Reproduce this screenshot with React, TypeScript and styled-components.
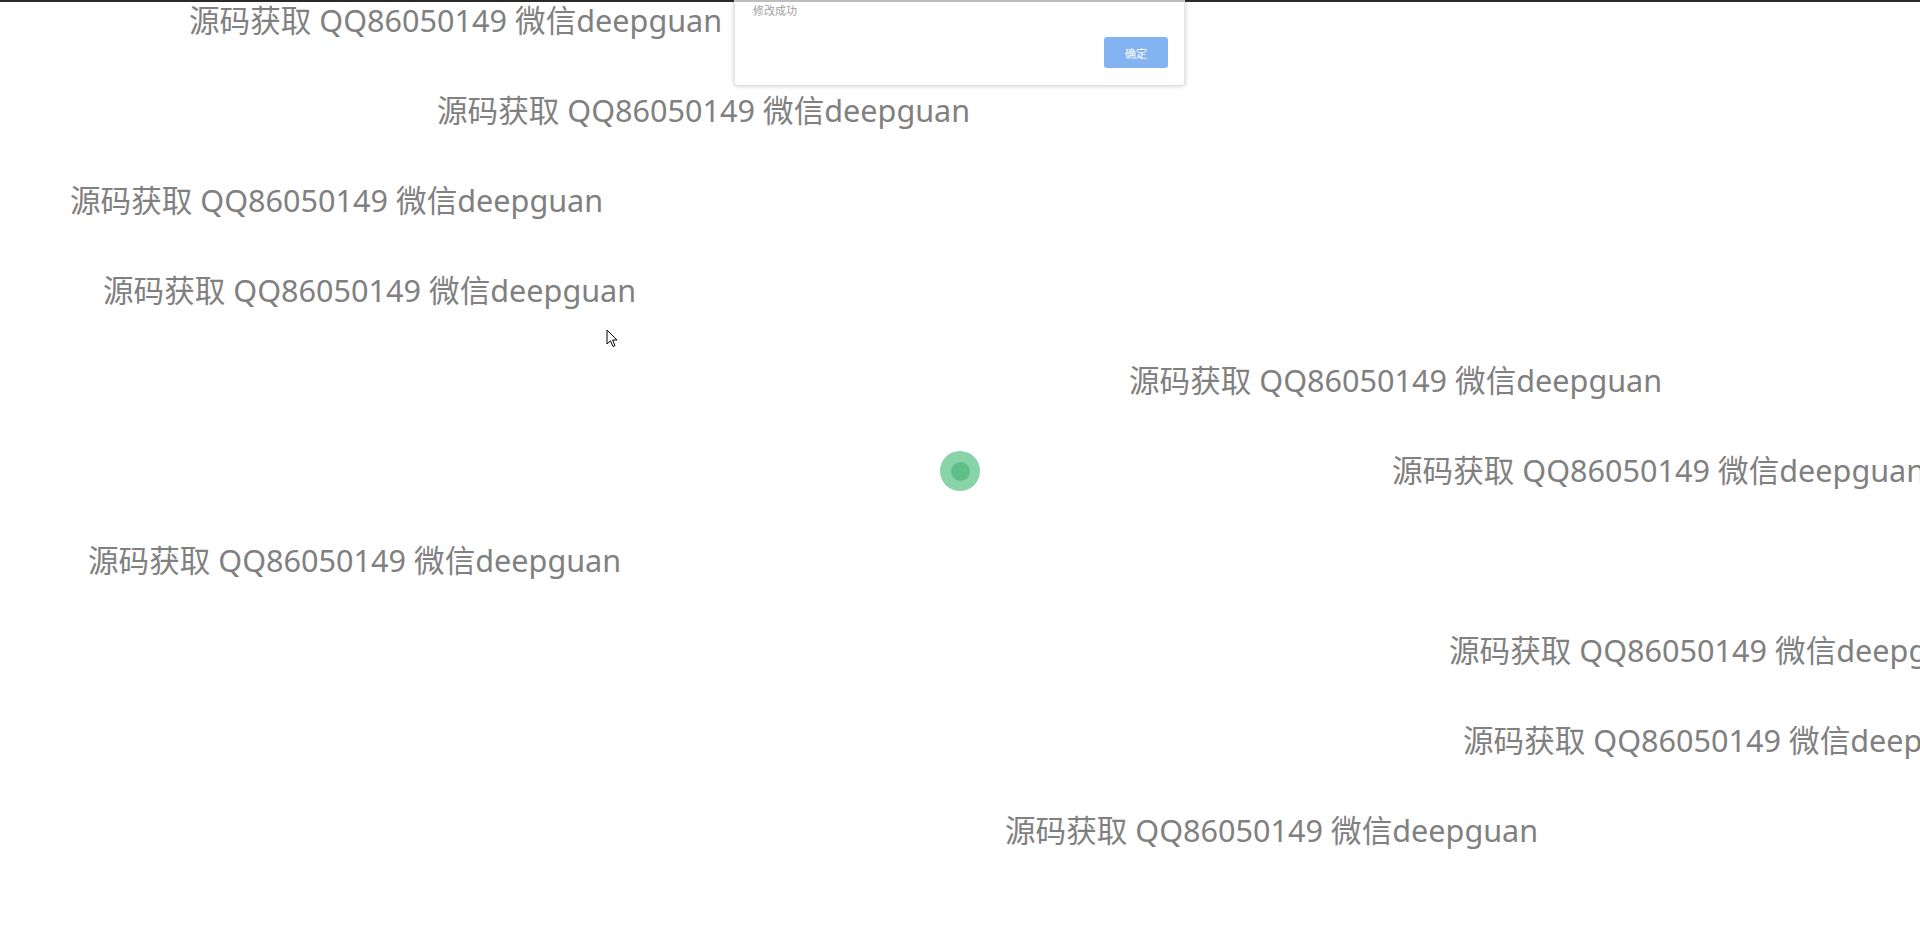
import React from "react";
import styled, { createGlobalStyle } from "styled-components";

const Global = createGlobalStyle`
  html, body { margin: 0; padding: 0; background: #ffffff; overflow: hidden; }
  body { width: 1920px; height: 938px; }
  #root { width: 1920px; height: 938px; }
`;

const Page = styled.div`
  position: relative;
  width: 1920px;
  height: 938px;
  overflow: hidden;
  background: #ffffff;
  display: flex;
  flex-direction: column;
`;

const TopBar = styled.div`
  height: 2px;
  flex: none;
  background: #2a2a2a;
`;

const Lines = styled.div`
  display: flex;
  flex-direction: column;
  gap: 50px;
  margin-top: -2px;
`;

const Line = styled.div<{ $indent: number }>`
  height: 40px;
  line-height: 40px;
  padding-left: ${(p) => p.$indent}px;
  white-space: nowrap;
  font-family: "Noto Sans", "Noto Sans CJK SC", sans-serif;
  font-size: 30.6px;
  color: #808080;
`;

const Dialog = styled.div`
  position: absolute;
  left: 734px;
  top: 0;
  width: 451px;
  height: 85px;
  box-sizing: border-box;
  background: #ffffff;
  border-top: 2px solid #bdbdbd;
  border-left: 1px solid #e6e6e6;
  border-right: 1px solid #e6e6e6;
  border-radius: 0 0 3px 3px;
  box-shadow: 0 1px 4px rgba(0, 0, 0, 0.22);
  display: flex;
  flex-direction: column;
  justify-content: space-between;
  padding: 1px 16px 17px 18px;
`;

const Message = styled.div`
  font-family: "Noto Sans CJK SC", sans-serif;
  font-size: 11px;
  line-height: 14px;
  color: #a0a0a0;
`;

const Footer = styled.div`
  display: flex;
  justify-content: flex-end;
`;

const OkButton = styled.button`
  width: 64px;
  height: 31px;
  border: none;
  border-radius: 3px;
  background: #84b3f2;
  color: #ffffff;
  font-family: "Noto Sans CJK SC", sans-serif;
  font-size: 11px;
  padding: 0;
`;

const Dot = styled.div`
  position: absolute;
  left: 940px;
  top: 451px;
  width: 40px;
  height: 40px;
  border-radius: 50%;
  background: #88d4a8;
  display: flex;
  align-items: center;
  justify-content: center;
`;

const DotCore = styled.div`
  width: 19px;
  height: 19px;
  border-radius: 50%;
  background: #5ebf88;
`;

const Cursor = styled.svg`
  position: absolute;
  left: 606px;
  top: 329px;
`;

const rows = [189, 437, 70, 103, 1129, 1392, 88, 1449, 1463, 1005];

export default function App() {
  return (
    <Page>
      <Global />
      <TopBar />
      <Lines>
        {rows.map((x, i) => (
          <Line key={i} $indent={x}>
            源码获取 QQ86050149 微信deepguan
          </Line>
        ))}
      </Lines>
      <Dialog>
        <Message>修改成功</Message>
        <Footer>
          <OkButton>确定</OkButton>
        </Footer>
      </Dialog>
      <Dot>
        <DotCore />
      </Dot>
      <Cursor width="13" height="20" viewBox="0 0 13 20">
        <path
          d="M1 1 L1 15 L4.5 11.8 L7 17.5 L9 16.6 L6.6 11 L11 11 Z"
          fill="#ffffff"
          stroke="#000000"
          strokeWidth="1"
          strokeLinejoin="round"
        />
      </Cursor>
    </Page>
  );
}
